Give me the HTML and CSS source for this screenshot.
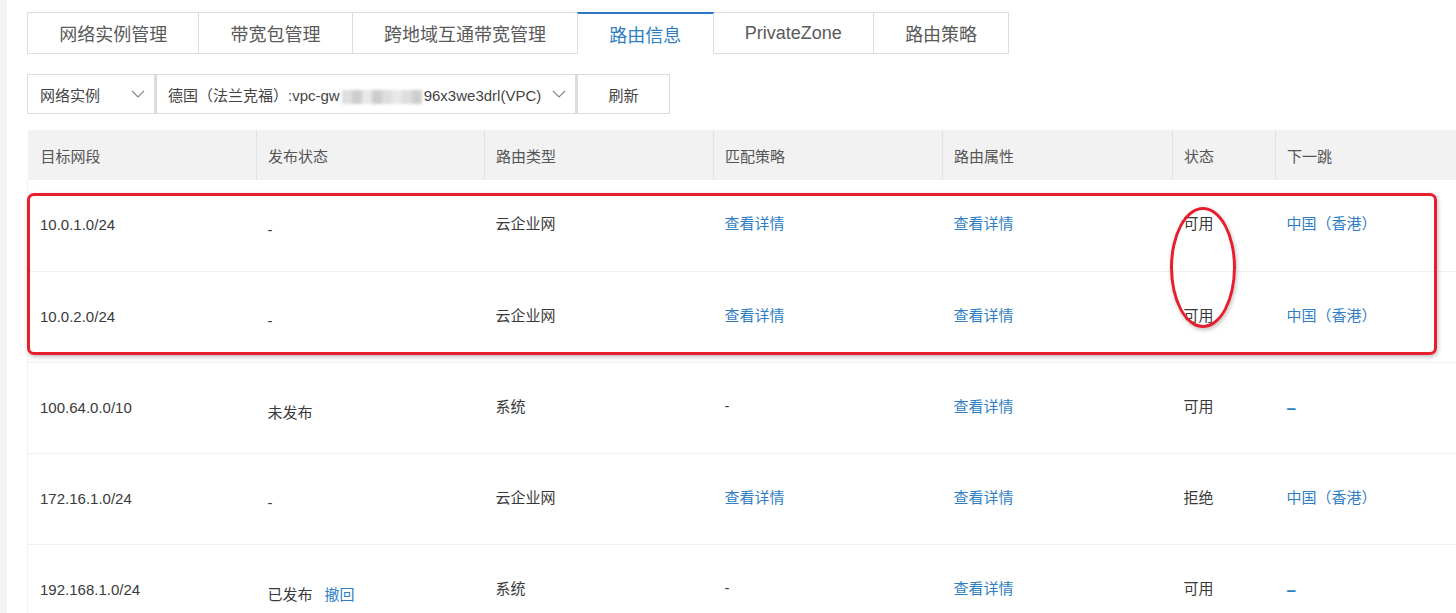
FILE: index.html
```html
<!DOCTYPE html>
<html lang="zh-CN">
<head>
    <meta charset="UTF-8">
    <meta name="viewport" content="width=device-width, initial-scale=1.0">
    <title>路由信息</title>
    <link rel="stylesheet" href="styles.css">
</head>
<body>

    <div class="page">
        <div class="side-strip"></div>

        <div class="main">
            <!-- Tabs -->
            <div class="tabs">
                <div class="tab">网络实例管理</div>
                <div class="tab">带宽包管理</div>
                <div class="tab">跨地域互通带宽管理</div>
                <div class="tab active">路由信息</div>
                <div class="tab">PrivateZone</div>
                <div class="tab">路由策略</div>
            </div>

            <!-- Filters -->
            <div class="toolbar">
                <div class="select select-type">
                    <span>网络实例</span>
                    <svg class="chevron" width="14" height="8" viewBox="0 0 14 8"><polyline points="1,1 7,7 13,1" fill="none" stroke="#888" stroke-width="1.2"/></svg>
                </div>
                <div class="select select-vpc">
                    <span>德国（法兰克福）:vpc-gw<span class="masked"><i></i><i></i><i></i><i></i><i></i><i></i><i></i><i></i></span>96x3we3drl(VPC)</span>
                    <svg class="chevron" width="14" height="8" viewBox="0 0 14 8"><polyline points="1,1 7,7 13,1" fill="none" stroke="#888" stroke-width="1.2"/></svg>
                </div>
                <button class="btn">刷新</button>
            </div>

            <!-- Route table -->
            <div class="table-wrap">
                <table class="route-table">
                    <colgroup>
                        <col style="width: 229px">
                        <col style="width: 228px">
                        <col style="width: 229px">
                        <col style="width: 229px">
                        <col style="width: 230px">
                        <col style="width: 103px">
                        <col>
                    </colgroup>
                    <thead>
                        <tr>
                            <th>目标网段</th>
                            <th>发布状态</th>
                            <th>路由类型</th>
                            <th>匹配策略</th>
                            <th>路由属性</th>
                            <th>状态</th>
                            <th>下一跳</th>
                        </tr>
                    </thead>
                    <tbody>
                        <tr>
                            <td class="cidr">10.0.1.0/24</td>
                            <td class="publish">-</td>
                            <td>云企业网</td>
                            <td><a class="link">查看详情</a></td>
                            <td><a class="link">查看详情</a></td>
                            <td>可用</td>
                            <td><a class="link">中国（香港）</a></td>
                        </tr>
                        <tr>
                            <td class="cidr">10.0.2.0/24</td>
                            <td class="publish">-</td>
                            <td>云企业网</td>
                            <td><a class="link">查看详情</a></td>
                            <td><a class="link">查看详情</a></td>
                            <td>可用</td>
                            <td><a class="link">中国（香港）</a></td>
                        </tr>
                        <tr>
                            <td class="cidr">100.64.0.0/10</td>
                            <td class="publish">未发布</td>
                            <td>系统</td>
                            <td>-</td>
                            <td><a class="link">查看详情</a></td>
                            <td>可用</td>
                            <td class="hop-none"><a class="link dash">–</a></td>
                        </tr>
                        <tr>
                            <td class="cidr">172.16.1.0/24</td>
                            <td class="publish">-</td>
                            <td>云企业网</td>
                            <td><a class="link">查看详情</a></td>
                            <td><a class="link">查看详情</a></td>
                            <td>拒绝</td>
                            <td><a class="link">中国（香港）</a></td>
                        </tr>
                        <tr>
                            <td class="cidr">192.168.1.0/24</td>
                            <td class="publish">已发布<a class="link withdraw">撤回</a></td>
                            <td>系统</td>
                            <td>-</td>
                            <td><a class="link">查看详情</a></td>
                            <td>可用</td>
                            <td class="hop-none"><a class="link dash">–</a></td>
                        </tr>
                    </tbody>
                </table>

                <!-- Annotation marks drawn over the table -->
                <div class="mark-box"></div>
                <div class="mark-ellipse"></div>
            </div>
        </div>
    </div>

</body>
</html>
```

FILE: styles.css
```css
body, html {
    margin: 0;
    height: 100%;
    overflow: hidden;
    background-color: #ffffff;
    font-family: 'Liberation Sans', 'Noto Sans CJK SC', sans-serif;
    color: #333333;
}

.page {
    display: flex;
    height: 100%;
}

.side-strip {
    width: 7px;
    flex-shrink: 0;
    background-color: #f4f4f5;
}

.main {
    flex: 1;
    padding: 12px 0 0 20px;
    min-width: 0;
}

/* Tabs */
.tabs {
    display: flex;
    height: 42px;
}

.tab {
    display: flex;
    align-items: center;
    padding: 0 31.2px;
    border: 1px solid #dedede;
    margin-left: -1px;
    font-size: 18px;
    color: #5a5a5a;
    background-color: #ffffff;
    box-sizing: border-box;
}

.tab:first-child {
    margin-left: 0;
}

.tab.active {
    color: #2f7dc3;
    border-top: 2px solid #2b79c2;
    border-bottom-color: #ffffff;
    position: relative;
    z-index: 1;
}

/* Toolbar */
.toolbar {
    display: flex;
    margin-top: 20px;
    height: 40px;
}

.select {
    display: flex;
    align-items: center;
    justify-content: space-between;
    border: 1px solid #dcdcdc;
    box-sizing: border-box;
    font-size: 15px;
    color: #444444;
    white-space: nowrap;
    overflow: hidden;
}

.select-type {
    width: 128px;
    padding: 0 9px 0 12px;
}

.select-vpc {
    width: 421px;
    padding: 0 9px 0 11px;
    border-left: 2px solid #dcdcdc;
}

/* pixelated blur over part of the VPC id */
.masked {
    display: inline-flex;
    vertical-align: middle;
    height: 14px;
    margin: 0 2px;
    filter: blur(1.5px);
}

.masked i {
    width: 10px;
    height: 14px;
    background-color: #dedede;
}

.masked i:nth-child(2n) {
    background-color: #cdcdcd;
}

.masked i:nth-child(3n) {
    background-color: #e8e8e8;
}

.chevron {
    flex-shrink: 0;
}

.btn {
    width: 94px;
    height: 40px;
    border: 1px solid #dcdcdc;
    border-left: 2px solid #dcdcdc;
    background-color: #ffffff;
    font-family: inherit;
    font-size: 15px;
    color: #444444;
    padding: 0;
}

/* Table */
.table-wrap {
    position: relative;
    margin-top: 16px;
}

.route-table {
    width: 1429px;
    border-collapse: collapse;
    table-layout: fixed;
    font-size: 15px;
}

.route-table th {
    height: 50px;
    background-color: #f2f2f3;
    text-align: left;
    font-weight: normal;
    color: #555555;
    padding: 0 11px;
    border-left: 1px solid #e2e2e2;
    box-sizing: border-box;
}

.route-table th:first-child {
    border-left: none;
    padding-left: 13px;
}

.route-table td {
    height: 91px;
    padding: 0 11px 5px 11px;
    border-bottom: 1px solid #f0f0f0;
    color: #3a3a3a;
    vertical-align: middle;
    box-sizing: border-box;
    white-space: nowrap;
}

.route-table td:first-child {
    border-left: 1px solid #f2f2f2;
    padding-left: 12px;
}

.route-table td.cidr {
    font-size: 15px;
    padding-bottom: 1px;
}

.route-table td.publish {
    padding-top: 13px;
}

.route-table td.hop-none {
    padding-top: 8px;
}

.link {
    color: #2f7ec4;
    text-decoration: none;
    cursor: pointer;
}

.link.dash {
    font-weight: bold;
    font-size: 17px;
}

.withdraw {
    margin-left: 12px;
}

/* Annotations */
.mark-box {
    position: absolute;
    left: 0;
    top: 63px;
    width: 1410px;
    height: 162px;
    border: 3px solid #e61e2e;
    border-radius: 7px;
    box-sizing: border-box;
    box-shadow: 1px 2px 4px rgba(0, 0, 0, 0.25);
}

.mark-ellipse {
    position: absolute;
    left: 1143px;
    top: 77px;
    width: 66px;
    height: 121px;
    border: 3px solid #e61e2e;
    border-radius: 50%;
    box-sizing: border-box;
    box-shadow: 1px 2px 4px rgba(0, 0, 0, 0.25);
}
```
